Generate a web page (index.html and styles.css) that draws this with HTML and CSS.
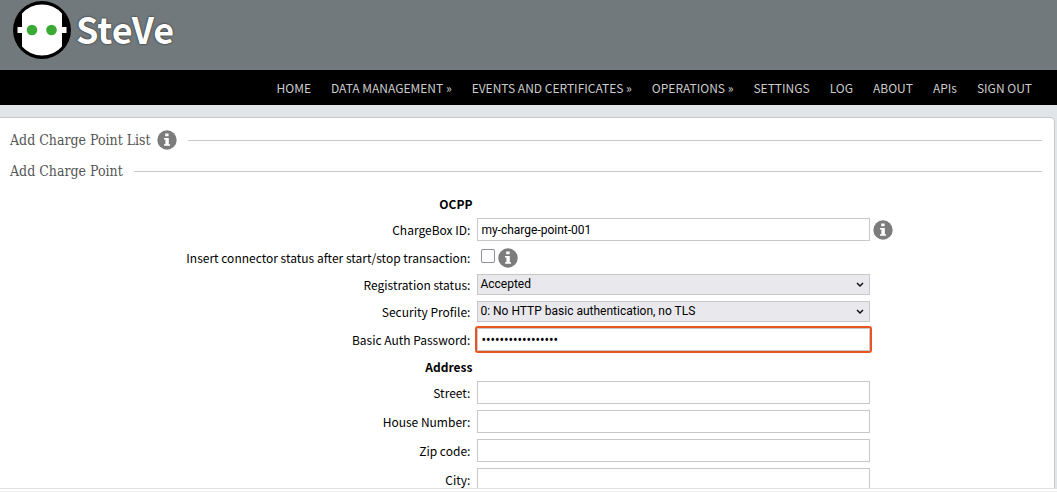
FILE: index.html
```html
<!DOCTYPE html>
<html lang="en">
<head>
<meta charset="utf-8">
<title>SteVe - Add Charge Point</title>
<link rel="stylesheet" href="styles.css">
</head>
<body>
<svg class="defs" aria-hidden="true">
  <symbol id="info" viewBox="0 0 20 20">
    <circle cx="10" cy="10" r="9.7" fill="#7c7c7c"/>
    <path fill="#fff" d="M8.2 3.6h3.4v2.7H8.2zM7 8h4.8v6.2h1.2v1.6H7v-1.6h1.4V9.6H7z"/>
  </symbol>
</svg>
<div class="view">
  <header class="banner">
    <a class="logo" href="#" aria-label="SteVe home">
      <svg class="mark" viewBox="0 0 58 58" aria-hidden="true">
        <circle cx="29" cy="29" r="29" fill="#000"/>
        <path fill="#fff" d="M9 12.500Q17 3.500 29 3.500T49 12.500V26H53.500V32H49V45.500Q41 54.500 29 54.500T9 45.500V32H4.500V26H9z"/>
        <circle cx="19" cy="29" r="5.300" fill="#3aaa35"/>
        <circle cx="38.500" cy="29" r="5.300" fill="#3aaa35"/>
      </svg>
      <span class="wordmark">SteVe</span>
    </a>
  </header>
  <nav class="menu">
    <a href="#">HOME</a>
    <a href="#">DATA MANAGEMENT »</a>
    <a href="#">EVENTS AND CERTIFICATES »</a>
    <a href="#">OPERATIONS »</a>
    <a href="#">SETTINGS</a>
    <a href="#">LOG</a>
    <a href="#">ABOUT</a>
    <a href="#">APIs</a>
    <a href="#">SIGN OUT</a>
  </nav>
  <main class="page">
    <div class="panel">
      <h2 class="section">Add Charge Point List <svg class="info"><use href="#info"/></svg></h2>
      <h2 class="section">Add Charge Point</h2>
      <form class="form">
        <div class="row"><h3 class="group">OCPP</h3></div>
        <div class="row">
          <label for="box">ChargeBox ID:</label>
          <div class="field"><input class="text" id="box" type="text" value="my-charge-point-001"><svg class="info"><use href="#info"/></svg></div>
        </div>
        <div class="row">
          <label for="insert">Insert connector status after start/stop transaction:</label>
          <div class="field"><input class="check" id="insert" type="checkbox"><svg class="info"><use href="#info"/></svg></div>
        </div>
        <div class="row">
          <label for="status">Registration status:</label>
          <div class="field"><div class="drop"><select id="status"><option>Accepted</option></select><svg class="arrow" viewBox="0 0 8 6"><path d="M1 1l3 3 3-3"/></svg></div></div>
        </div>
        <div class="row">
          <label for="profile">Security Profile:</label>
          <div class="field"><div class="drop"><select id="profile"><option>0: No HTTP basic authentication, no TLS</option></select><svg class="arrow" viewBox="0 0 8 6"><path d="M1 1l3 3 3-3"/></svg></div></div>
        </div>
        <div class="row">
          <label for="password">Basic Auth Password:</label>
          <div class="field"><input class="text active" id="password" type="password" value="abcdefghijklmnopq"></div>
        </div>
        <div class="row"><h3 class="group">Address</h3></div>
        <div class="row">
          <label for="street">Street:</label>
          <div class="field"><input class="text" id="street" type="text"></div>
        </div>
        <div class="row">
          <label for="house">House Number:</label>
          <div class="field"><input class="text" id="house" type="text"></div>
        </div>
        <div class="row">
          <label for="zip">Zip code:</label>
          <div class="field"><input class="text" id="zip" type="text"></div>
        </div>
        <div class="row">
          <label for="city">City:</label>
          <div class="field"><input class="text" id="city" type="text"></div>
        </div>
      </form>
    </div>
  </main>
</div>
</body>
</html>
```
FILE: styles.css
```css
* { box-sizing: border-box; }
body {
  margin: 0;
  background: #fff;
  color: #000;
  font: 12px/18px "Noto Sans CJK SC", sans-serif;
}
.defs { display: none; }
.view {
  display: flex;
  flex-direction: column;
  height: 100vh;
  overflow: hidden;
  border-bottom: 1px solid #eee;
}
.view::after {
  content: "";
  flex: none;
  height: 2px;
  border-top: 1px solid #e0e0e0;
}
.banner {
  flex: none;
  height: 70px;
  padding: 1px 13px;
  background: #71797c;
}
.logo {
  display: inline-flex;
  align-items: flex-start;
  gap: 5px;
  text-decoration: none;
}
.mark { width: 58px; height: 58px; }
.wordmark {
  color: #fff;
  font-size: 36px;
  font-weight: 700;
  line-height: 54px;
  text-shadow: 0 0 2px #222, 0 0 1px #444;
}
.menu {
  flex: none;
  display: flex;
  justify-content: flex-end;
  gap: 20px;
  padding: 0 25px;
  background: #000;
  line-height: 35px;
}
.menu a {
  color: #ccc;
  text-decoration: none;
  white-space: nowrap;
}
.page {
  flex: 1;
  min-height: 0;
  overflow: hidden;
  padding: 12px 2px 0 0;
  background: #e0e5e9;
}
.panel {
  padding: 12px 12px 20px 10px;
  background: #fff;
  border: 1px solid #c8c8c8;
  border-left: 0;
  border-radius: 0 5px 0 0;
}
.section {
  display: flex;
  align-items: center;
  gap: 6px;
  margin: 0 0 11px;
  color: #555;
  font: 14px/20px "DejaVu Serif Condensed", "DejaVu Serif", serif;
}
.section::after {
  content: "";
  flex: 1;
  height: 1px;
  margin-left: 5px;
  background: #c8c8c8;
}
.info { flex: none; width: 20px; height: 20px; }
.form {
  display: flex;
  flex-direction: column;
  gap: 6px;
  padding-top: 2px;
}
.row {
  display: grid;
  grid-template-columns: 45% 1fr;
  column-gap: 3px;
  align-items: center;
}
.row label { padding-right: 4px; text-align: right; }
.group {
  margin: 0;
  padding: 2px 2px 0 0;
  font-size: 12px;
  font-weight: 700;
  line-height: 16px;
  text-align: right;
}
.field { display: flex; align-items: center; gap: 3px; }
.text, .drop { width: 100%; max-width: 393px; }
.text, .drop select {
  color: #000;
  border: 1px solid #c8c8c8;
  border-radius: 0;
  font: 12px/17px Roboto, sans-serif;
}
.text { height: 23px; padding: 0 3px; background: #fff; }
.active {
  border-radius: 1px;
  outline: 2px solid #e95420;
  font-family: "Noto Sans", sans-serif;
}
.check {
  appearance: none;
  width: 14px;
  height: 14px;
  margin: 2px 0 5px 4px;
  background: #fff;
  border: 1px solid #8f8f9d;
  border-radius: 2px;
}
.drop { display: grid; align-items: center; }
.drop select {
  grid-area: 1 / 1;
  appearance: none;
  width: 100%;
  height: 21px;
  padding: 0 20px 0 2px;
  background: #e9e9ed;
}
.arrow {
  grid-area: 1 / 1;
  justify-self: end;
  width: 8px;
  height: 6px;
  margin-right: 6px;
  fill: none;
  stroke: #111;
  stroke-width: 1.5;
  pointer-events: none;
}
```
